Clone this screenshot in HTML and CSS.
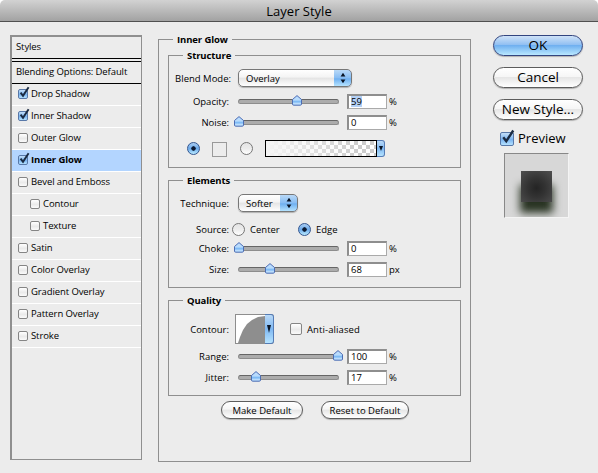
FILE: index.html
```html
<!DOCTYPE html>
<html lang="en">
<head>
    <meta charset="UTF-8">
    <meta name="viewport" content="width=device-width, initial-scale=1.0">
    <title>Layer Style</title>
    <link rel="stylesheet" href="styles.css">
</head>
<body>

<header class="titlebar"><h1>Layer Style</h1></header>

<main class="dialog">
    <nav class="styles">
        <div class="styles-title"><span>Styles</span></div>
        <div class="styles-blending"><span>Blending Options: Default</span></div>
        <ul id="styleList"></ul>
    </nav>

    <fieldset class="group settings">
        <legend>Inner Glow</legend>

        <fieldset class="group structure">
            <legend>Structure</legend>
            <div class="row row-popup">
                <label class="wide">Blend Mode:</label>
                <div class="popup popup-blend"><span>Overlay</span><i class="arrows"></i></div>
            </div>
            <div class="row"><label>Opacity:</label><div class="slider" data-pos="59"></div><div class="field"><mark>59</mark></div><span class="unit">%</span></div>
            <div class="row"><label>Noise:</label><div class="slider" data-pos="0"></div><div class="field">0</div><span class="unit">%</span></div>
            <div class="row row-color">
                <i class="radio on"></i>
                <i class="swatch"></i>
                <i class="radio"></i>
                <div class="gradient"><i class="checker"></i><i class="drop"></i></div>
            </div>
        </fieldset>

        <fieldset class="group elements">
            <legend>Elements</legend>
            <div class="row row-popup">
                <label>Technique:</label>
                <div class="popup popup-soft"><span>Softer</span><i class="arrows"></i></div>
            </div>
            <div class="row row-source">
                <label>Source:</label>
                <i class="radio"></i><span class="radio-text">Center</span>
                <i class="radio on"></i><span class="radio-text">Edge</span>
            </div>
            <div class="row"><label>Choke:</label><div class="slider" data-pos="0"></div><div class="field">0</div><span class="unit">%</span></div>
            <div class="row"><label>Size:</label><div class="slider" data-pos="31"></div><div class="field">68</div><span class="unit">px</span></div>
        </fieldset>

        <fieldset class="group quality">
            <legend>Quality</legend>
            <div class="row row-contour">
                <label>Contour:</label>
                <div class="contour">
                    <svg width="29" height="28" viewBox="0 0 29 28"><path d="M2 28 L4 22 L7 15 L11 9 L16 5 L22 2 L29 1 V28 Z" fill="#8e8e8e"/></svg>
                    <i class="drop"></i>
                </div>
                <i class="check"></i>
                <span class="aliased">Anti-aliased</span>
            </div>
            <div class="row"><label>Range:</label><div class="slider" data-pos="100"></div><div class="field">100</div><span class="unit">%</span></div>
            <div class="row"><label>Jitter:</label><div class="slider" data-pos="17"></div><div class="field">17</div><span class="unit">%</span></div>
        </fieldset>

        <div class="defaults">
            <button class="make">Make Default</button>
            <button class="reset">Reset to Default</button>
        </div>
    </fieldset>

    <aside class="actions">
        <button class="ok">OK</button>
        <button>Cancel</button>
        <button class="new-style">New Style...</button>
        <div class="preview-toggle"><i class="check on big"></i><span>Preview</span></div>
        <div class="preview"><div class="preview-shadow"></div><div class="preview-square"></div></div>
    </aside>
</main>

<script>
    // Effects shown in the left list
    const effects = [
        { name: "Drop Shadow", on: true },
        { name: "Inner Shadow", on: true },
        { name: "Outer Glow" },
        { name: "Inner Glow", on: true, selected: true },
        { name: "Bevel and Emboss" },
        { name: "Contour", sub: true },
        { name: "Texture", sub: true },
        { name: "Satin" },
        { name: "Color Overlay" },
        { name: "Gradient Overlay" },
        { name: "Pattern Overlay" },
        { name: "Stroke" }
    ];

    const list = document.getElementById("styleList");
    effects.forEach(effect => {
        const li = document.createElement("li");
        if (effect.selected) li.classList.add("selected");
        if (effect.sub) li.classList.add("sub");
        li.innerHTML = `<i class="check${effect.on ? " on" : ""}"></i><span>${effect.name}</span>`;
        list.appendChild(li);
    });

    // Tick marks
    document.querySelectorAll(".check.on").forEach(box => {
        box.innerHTML = `<svg viewBox="0 0 12 13"><path d="M2.6 6.6 L5 9.8 L10.6 1.2" fill="none" stroke="#1b2b42" stroke-width="1.9"/></svg>`;
    });

    // Slider thumbs
    document.querySelectorAll(".slider").forEach(slider => {
        slider.innerHTML = `<svg class="thumb" style="left: ${slider.dataset.pos}%" width="10" height="11" viewBox="0 0 10 11">
            <path d="M0.5 4.5 L5 0.6 L9.5 4.5 V9 Q9.5 10.2 8.3 10.2 H1.7 Q0.5 10.2 0.5 9 Z" fill="#b9dcfd" stroke="#4d6db3"/>
            <path d="M1 5.6 H9 V7.6 H1 Z" fill="#7fbbf5"/>
        </svg>`;
    });

    // Popup and picker arrows
    document.querySelectorAll(".arrows").forEach(el => {
        el.innerHTML = `<svg width="6" height="12" viewBox="0 0 6 12"><path d="M3 0.8 L5.4 4.5 H0.6 Z M3 11.2 L5.4 7.5 H0.6 Z" fill="#0a1526"/></svg>`;
    });
    document.querySelectorAll(".drop").forEach(el => {
        el.innerHTML = `<svg viewBox="0 0 4 6" preserveAspectRatio="none"><path d="M0 0 H4 L2 6 Z" fill="#0a1526"/></svg>`;
    });
</script>

</body>
</html>
```
FILE: styles.css
```css
* {
    box-sizing: border-box;
}

body {
    margin: 0;
    width: 598px;
    height: 473px;
    overflow: hidden;
    background-color: #fff;
    font-family: "Open Sans", "Noto Sans", sans-serif;
    font-size: 9.5px;
    line-height: 13px;
    color: #000;
}

.titlebar {
    height: 22px;
    background: linear-gradient(#d2d2d2, #a2a2a2);
    border-bottom: 1px solid #505050;
    border-radius: 5px 5px 0 0;
}

.titlebar h1 {
    margin: 0;
    font-size: 13px;
    font-weight: 400;
    line-height: 22px;
    text-align: center;
}

.dialog {
    display: flex;
    align-items: flex-start;
    height: 451px;
    padding: 11px 0 0 10px;
    background-color: #ececec;
}

span, label, button {
    white-space: nowrap;
}

svg {
    display: block;
}

/* Left list */
.styles {
    width: 132px;
    height: 425px;
    margin-top: 2px;
    border: 1px solid #8f8f8f;
    border-width: 2px 1px 1px 2px;
    letter-spacing: -0.1px;
}

.styles-title {
    height: 25px;
    padding: 3px 0 0 4px;
    border-bottom: 4px double #000;
}

.styles-blending {
    height: 22px;
    padding: 3px 0 0 4px;
    border-bottom: 1px solid #000;
}

.styles ul {
    margin: 0;
    padding: 0;
    list-style: none;
}

.styles li {
    display: flex;
    align-items: center;
    gap: 3px;
    height: 22px;
    padding: 0 0 2px 6px;
    border-bottom: 1px solid #fff;
}

.styles li.sub {
    padding-left: 18px;
}

.styles li.selected {
    background-color: #b3d5ff;
    font-weight: 700;
}

.check {
    flex: none;
    width: 10px;
    height: 10px;
    border: 1px solid #858585;
    border-radius: 2px;
    background: linear-gradient(#fff, #eaeaea 55%, #fafafa);
}

.check.on {
    border-color: #5878a8;
    background: linear-gradient(#c3def8, #7ab4f0 55%, #b5e2ff);
}

.check svg {
    width: 12px;
    margin: -4px 0 0 -1px;
    overflow: visible;
}

/* Groups */
.group {
    min-width: 0;
    margin: 0;
    padding: 0;
    border: 1px solid #8f8f8f;
}

legend {
    height: 13px;
    padding: 0 4px;
    font-weight: 700;
    letter-spacing: -0.1px;
}

.settings {
    width: 313px;
    height: 429px;
    margin-left: 16px;
}

.settings > legend {
    margin-left: 14px;
}

.group .group {
    width: 293px;
    margin-left: 9px;
}

.group .group legend {
    margin-left: 14px;
}

.structure {
    height: 119px;
    margin-top: 3px;
}

.elements {
    height: 114px;
    margin-top: 6px;
}

.quality {
    height: 102px;
    margin-top: 6px;
}

.row {
    display: flex;
    align-items: center;
    height: 21px;
}

.row label {
    flex: none;
    width: 60px;
    margin-right: 9px;
    text-align: right;
}

.row label.wide {
    width: 62px;
    margin-right: 7px;
}

.row-popup {
    height: 18px;
    margin-top: 7px;
    margin-bottom: 4px;
}

.popup {
    display: flex;
    align-items: stretch;
    justify-content: space-between;
    height: 18px;
    border: 1px solid #777;
    border-radius: 5px;
    background: linear-gradient(#fff, #f4f4f4 45%, #e4e4e4 50%, #fff);
    box-shadow: 0 1px 1px rgba(0, 0, 0, 0.25);
    overflow: hidden;
}

.popup span {
    padding-left: 7px;
    line-height: 17px;
}

.popup-blend {
    width: 114px;
}

.popup-soft {
    width: 60px;
}

.arrows {
    display: flex;
    align-items: center;
    justify-content: center;
    width: 18px;
    margin: -1px;
    border: 1px solid #3d5e9d;
    border-left: 0;
    border-radius: 0 5px 5px 0;
    background: linear-gradient(#b9d9f7, #86bcf3 50%, #6eaff0 55%, #b5e3ff);
}

.slider {
    position: relative;
    flex: none;
    width: 101px;
    height: 5px;
    border: 1px solid #8d8d8d;
    border-top-color: #666;
    border-radius: 3px;
    background-color: #acacac;
}

.thumb {
    position: absolute;
    top: -5px;
    margin-left: -5px;
}

.field {
    flex: none;
    width: 40px;
    height: 15px;
    margin-left: 8px;
    padding-left: 2px;
    border: 1px solid #aaa;
    border-width: 2px 1px 1px 2px;
    border-top-color: #8e8e8e;
    border-left-color: #8e8e8e;
    background-color: #fff;
    line-height: 12px;
}

.field mark {
    display: inline-block;
    height: 11px;
    background-color: #b3d0f5;
    color: #000;
}

.unit {
    margin: 0 0 1px 2px;
}

.radio {
    flex: none;
    width: 13px;
    height: 13px;
    border: 1px solid #777;
    border-radius: 50%;
    background: linear-gradient(#e4e4e4, #ececec 50%, #fff);
}

.radio.on {
    border-color: #33558f;
    background: radial-gradient(circle at 50% 50%, #0b1a33 0 1.9px, transparent 2.5px), linear-gradient(#a9cdf2, #6ba9ea 50%, #b9eaff);
}

.row-color {
    height: 17px;
    margin-top: 7px;
    padding-left: 18px;
}

.swatch {
    width: 15px;
    height: 15px;
    margin: 1px 13px 0 12px;
    border: 1px solid #999;
}

.gradient {
    display: flex;
    width: 120px;
    height: 17px;
    margin-left: 12px;
}

.checker {
    width: 112px;
    border: 1px solid #000;
    background: linear-gradient(90deg, #f4f4f4, rgba(250, 250, 250, 0) 85%), repeating-conic-gradient(#fff 0 25%, #ccc 0 50%) 0 0 / 8px 8px;
}

.drop {
    display: flex;
    align-items: center;
    justify-content: center;
    width: 8px;
    border: 1px solid #557cb5;
    border-left: 0;
    border-radius: 0 3px 3px 0;
    background: linear-gradient(#b9d9f7, #7fb8f2 50%, #b5e3ff);
}

.drop svg {
    width: 4px;
    height: 5px;
}

.row-source {
    height: 18px;
    margin-top: 8px;
}

.row-source label {
    margin-right: 3px;
}

.row-source .radio-text {
    width: 47px;
    margin: 1px 0 0 5px;
}

.row-source .radio-text + .radio {
    margin-left: 1px;
}

.row-contour {
    height: 30px;
    margin: 7px 0 2px;
}

.row-contour label {
    margin-right: 6px;
}

.contour {
    display: flex;
    width: 39px;
    height: 30px;
    border: 1px solid #8e8e8e;
    border-right: 0;
    border-radius: 0 3px 3px 0;
    background-color: #fff;
}

.contour .drop {
    width: 9px;
    margin: -1px 0;
}

.contour .drop svg {
    height: 8px;
}

.row-contour .check {
    width: 12px;
    height: 12px;
    margin-left: 16px;
}

.aliased {
    margin-left: 5px;
    letter-spacing: 0.1px;
}

/* Buttons */
button {
    padding: 0;
    border: 1px solid #5c5c5c;
    border-radius: 11px;
    background: linear-gradient(#fff, #f6f6f6 45%, #e6e6e6 50%, #fff);
    box-shadow: 0 1px 1px rgba(0, 0, 0, 0.25);
    font-family: inherit;
    color: #000;
}

.defaults {
    display: flex;
    gap: 18px;
    margin: 5px 0 0 62px;
}

.defaults button {
    height: 18px;
    font-size: 9.5px;
    line-height: 15px;
}

.make {
    width: 82px;
}

.reset {
    width: 88px;
}

.actions {
    display: flex;
    flex-direction: column;
    width: 90px;
    margin: 2px 0 0 22px;
}

.actions button {
    height: 21px;
    margin-bottom: 11px;
    font-size: 13.5px;
    line-height: 17px;
}

.actions .ok {
    border-color: #33457f;
    background: linear-gradient(#cfe2f7, #92c0f2 45%, #70b0f0 50%, #b9e8ff);
}

.preview-toggle {
    display: flex;
    align-items: center;
    gap: 4px;
    height: 15px;
    padding-left: 7px;
    font-size: 13px;
}

.check.big {
    width: 14px;
    height: 14px;
}

.check.big svg {
    width: 15px;
}

.preview {
    position: relative;
    width: 65px;
    height: 65px;
    margin: 7px 0 0 11px;
    border: 1px solid #f4f4f4;
    border-top-color: #888;
    border-left-color: #888;
    background-color: #d7d7d7;
    overflow: hidden;
}

.preview-square {
    position: absolute;
    left: 16px;
    top: 17px;
    width: 31px;
    height: 31px;
    background: radial-gradient(circle at 50% 55%, #242424, #333 40%, #505050);
}

.preview-shadow {
    position: absolute;
    left: 15px;
    top: 31px;
    width: 33px;
    height: 28px;
    background-color: #283322;
    filter: blur(4px);
}
```
